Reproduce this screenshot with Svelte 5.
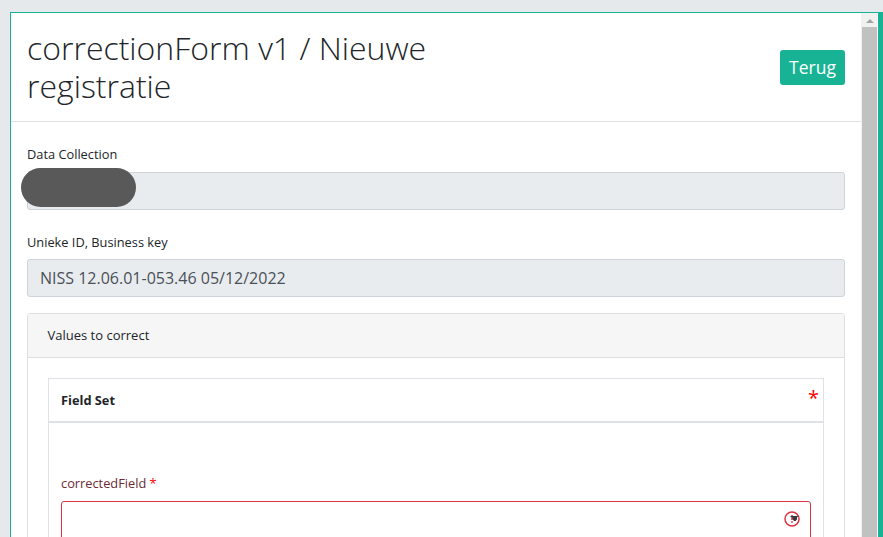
<script>
  let title = 'correctionForm v1 / Nieuwe registratie'
  let businessKey = 'NISS 12.06.01-053.46 05/12/2022'
</script>

<div class="page">
  <div class="modal">
    <div class="content">
      <header class="head">
        <h1>{title}</h1>
        <button class="back">Terug</button>
      </header>
      <div class="body">
        <div class="group">
          <label for="dc" class="first">Data Collection</label>
          <div class="redact-wrap">
            <input id="dc" disabled value="" />
            <div class="redact"></div>
          </div>
        </div>
        <div class="group">
          <label for="key">Unieke ID, Business key</label>
          <input id="key" disabled value={businessKey} />
        </div>
        <div class="card">
          <div class="card-head">Values to correct</div>
          <div class="card-body">
            <div class="fieldset">
              <div class="fs-head">
                <strong>Field Set</strong>
                <span class="star">*</span>
              </div>
              <div class="fs-body">
                <label for="cf" class="invalid">correctedField <span class="req">*</span></label>
                <div class="select">
                  <svg class="err" width="16" height="16" viewBox="0 0 16 16">
                    <circle cx="8" cy="8" r="7" fill="none" stroke="#dc3545" stroke-width="1.5" />
                    <rect x="7.2" y="4" width="1.6" height="5" fill="#dc3545" />
                    <rect x="7.2" y="10.2" width="1.6" height="1.6" fill="#dc3545" />
                    <path d="M5.5 5h9l-1.5 1.5v2l-1.5 1.5h-1.5l-1.5-2v-1.5z" fill="#343a40" />
                  </svg>
                </div>
              </div>
            </div>
          </div>
        </div>
      </div>
    </div>
    <div class="scrollbar">
      <div class="arrow"></div>
      <div class="thumb"></div>
    </div>
  </div>
</div>

<style>
  :global(body) {
    margin: 0;
    overflow: hidden;
  }
  .page {
    height: 537px;
    box-sizing: border-box;
    padding: 12px 0 0 10px;
    background: #e6e9ec;
    font-family: "Open Sans", sans-serif;
    color: #212529;
    overflow: hidden;
  }
  .modal {
    display: flex;
    height: 600px;
    background: #fff;
    border-top: 1px solid #18b394;
    border-left: 1px solid #18b394;
    border-right: 5px solid #18b394;
  }
  .content {
    flex: 1;
    min-width: 0;
  }
  .head {
    display: flex;
    align-items: center;
    justify-content: space-between;
    padding: 16px;
    height: 109px;
    box-sizing: border-box;
    border-bottom: 1px solid #dee2e6;
  }
  h1 {
    margin: 0;
    width: 440px;
    font-size: 32px;
    font-weight: 300;
    line-height: 38.4px;
  }
  .back {
    width: 65px;
    height: 35px;
    padding: 0;
    border: none;
    border-radius: 3px;
    background: #18b394;
    color: #fff;
    font: 400 17.5px "Open Sans", sans-serif;
  }
  .body {
    padding: 23px 16px 0;
  }
  .group {
    margin-bottom: 23px;
  }
  .group + .group {
    margin-bottom: 16px;
  }
  label {
    display: block;
    font-size: 12.8px;
    line-height: 18px;
    margin-bottom: 8px;
  }
  label.first {
    margin-bottom: 9px;
  }
  input {
    display: block;
    width: 100%;
    height: 38px;
    box-sizing: border-box;
    padding: 0 12px;
    border: 1px solid #ced4da;
    border-radius: 3px;
    background: #e9ecef;
    color: #495057;
    font: 400 16px "Open Sans", sans-serif;
  }
  .redact-wrap {
    position: relative;
  }
  .redact {
    position: absolute;
    left: -6px;
    top: -4px;
    width: 115px;
    height: 39px;
    border-radius: 20px;
    background: #595959;
  }
  .card {
    border: 1px solid #dfdfdf;
    border-radius: 3px;
  }
  .card-head {
    height: 44px;
    box-sizing: border-box;
    padding: 0 19.5px 2px;
    display: flex;
    align-items: center;
    font-size: 13px;
    background: #f6f6f6;
    border-bottom: 1px solid #dfdfdf;
  }
  .card-body {
    padding: 20px;
  }
  .fieldset {
    border: 1px solid #dee2e6;
  }
  .fs-head {
    display: flex;
    justify-content: space-between;
    align-items: center;
    height: 44px;
    box-sizing: border-box;
    padding: 0 4px 1px 12px;
    border-bottom: 2px solid #dee2e6;
    font-size: 12.8px;
  }
  .star {
    color: #f00;
    font-size: 20px;
    line-height: 20px;
    margin-top: -3px;
  }
  .fs-body {
    padding: 51px 12px 12px;
  }
  .invalid {
    color: #6e2a35;
    margin-bottom: 9px;
  }
  .req {
    color: #f00;
  }
  .select {
    position: relative;
    height: 60px;
    border: 1px solid #dc3545;
    border-radius: 3px;
  }
  .err {
    position: absolute;
    right: 10px;
    top: 9px;
  }
  .scrollbar {
    width: 15px;
    flex: none;
    padding-left: 1px;
    margin-right: 1px;
    background: #f1f1f1;
  }
  .arrow {
    width: 0;
    margin: 6px auto 4px;
    border-left: 4px solid transparent;
    border-right: 4px solid transparent;
    border-bottom: 4px solid #a3a3a3;
  }
  .thumb {
    height: 600px;
    background: #c1c1c1;
  }
</style>
